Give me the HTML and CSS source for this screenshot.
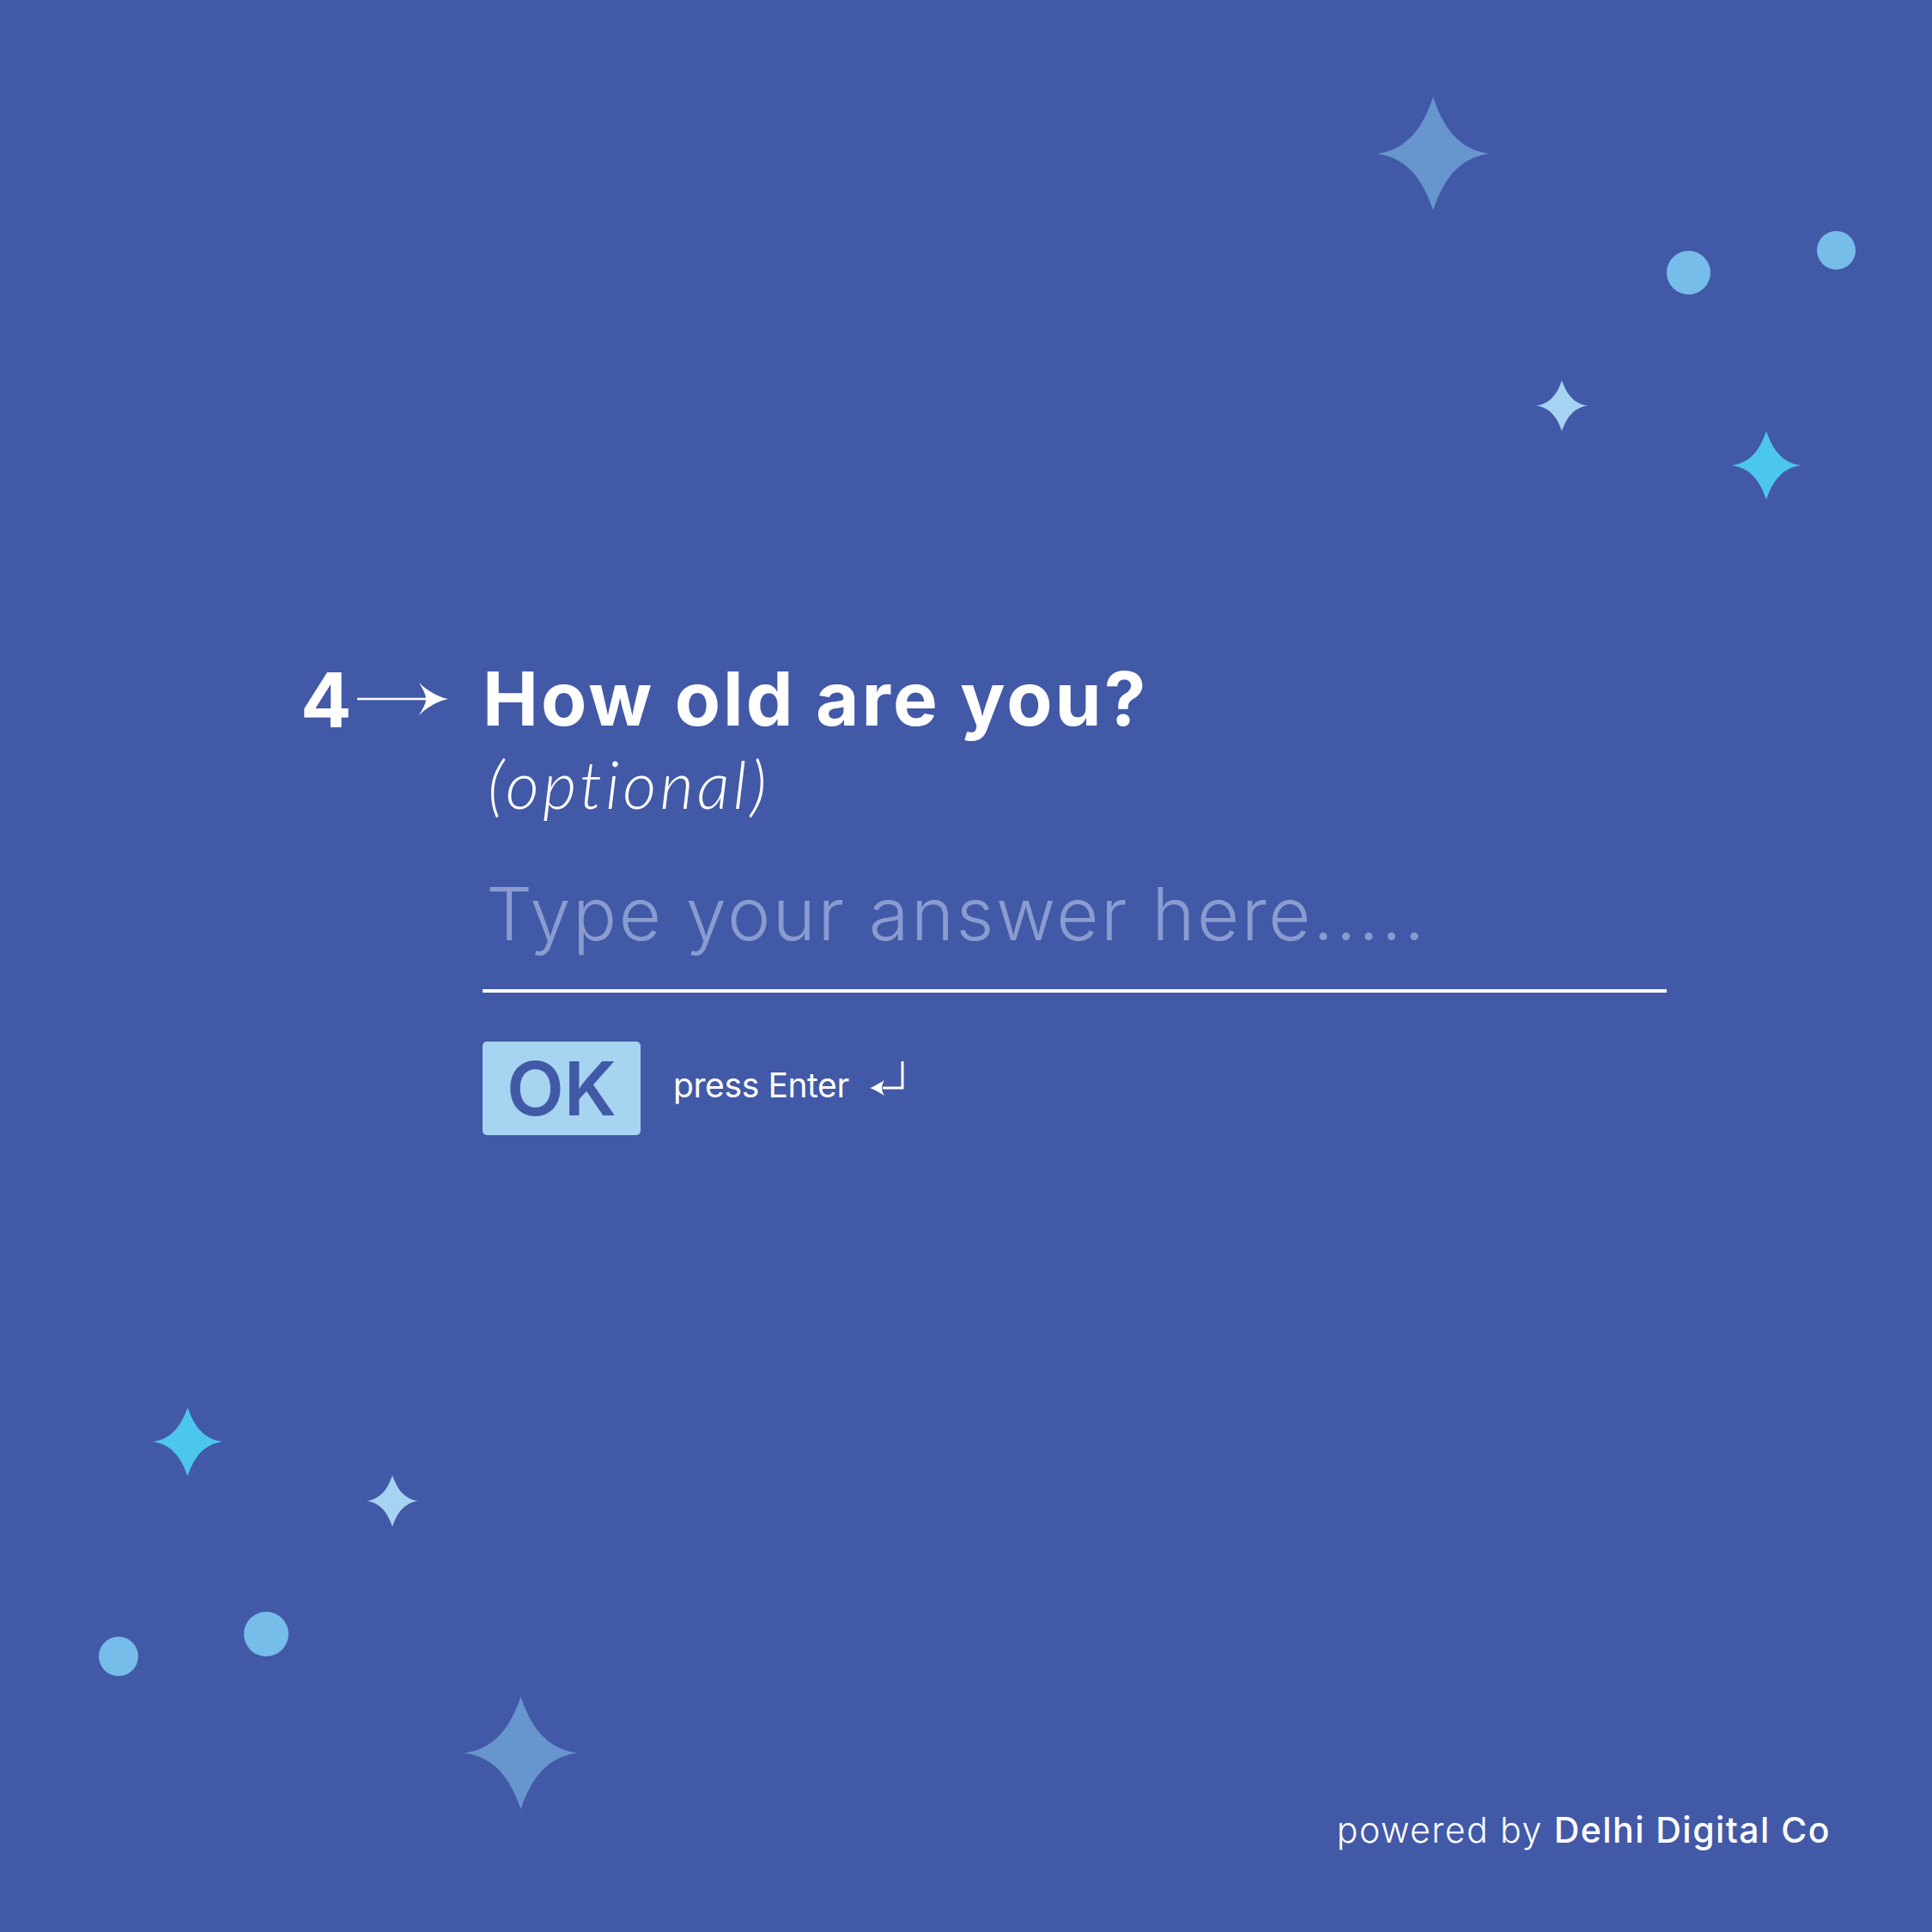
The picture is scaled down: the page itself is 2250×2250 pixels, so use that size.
FILE: index.html
```html
<!DOCTYPE html>
<html lang="en">
<head>
<meta charset="utf-8">
<title>How old are you?</title>
<link rel="stylesheet" href="styles.css">
</head>
<body>
<main class="canvas">
  <svg class="deco star-big deco-tr1" viewBox="0 0 100 100" preserveAspectRatio="none" aria-hidden="true"><path d="M50 0 C59 26 72 46 100 50 C72 54 59 74 50 100 C41 74 28 54 0 50 C28 46 41 26 50 0 Z"/></svg>
  <span class="deco dot dot-tr1"></span>
  <span class="deco dot dot-tr2"></span>
  <svg class="deco star-light deco-tr2" viewBox="0 0 100 100" preserveAspectRatio="none" aria-hidden="true"><path d="M50 0 C59 26 72 46 100 50 C72 54 59 74 50 100 C41 74 28 54 0 50 C28 46 41 26 50 0 Z"/></svg>
  <svg class="deco star-cyan deco-tr3" viewBox="0 0 100 100" preserveAspectRatio="none" aria-hidden="true"><path d="M50 0 C59 26 72 46 100 50 C72 54 59 74 50 100 C41 74 28 54 0 50 C28 46 41 26 50 0 Z"/></svg>

  <svg class="deco star-cyan deco-bl1" viewBox="0 0 100 100" preserveAspectRatio="none" aria-hidden="true"><path d="M50 0 C59 26 72 46 100 50 C72 54 59 74 50 100 C41 74 28 54 0 50 C28 46 41 26 50 0 Z"/></svg>
  <svg class="deco star-light deco-bl2" viewBox="0 0 100 100" preserveAspectRatio="none" aria-hidden="true"><path d="M50 0 C59 26 72 46 100 50 C72 54 59 74 50 100 C41 74 28 54 0 50 C28 46 41 26 50 0 Z"/></svg>
  <span class="deco dot dot-bl1"></span>
  <span class="deco dot dot-bl2"></span>
  <svg class="deco star-big deco-bl3" viewBox="0 0 100 100" preserveAspectRatio="none" aria-hidden="true"><path d="M50 0 C59 26 72 46 100 50 C72 54 59 74 50 100 C41 74 28 54 0 50 C28 46 41 26 50 0 Z"/></svg>

  <section class="question">
    <div class="q-index">
      <span class="q-num">4</span>
      <svg class="q-arrow" viewBox="0 0 106 40" aria-hidden="true">
        <line x1="0" y1="20" x2="82" y2="20" stroke="#fff" stroke-width="2.5"/>
        <path d="M106 20 C95 22 82 29 72 39 C76 32 80 26 80 20 C80 14 76 8 72 1 C82 11 95 18 106 20 Z" fill="#fff"/>
      </svg>
    </div>
    <div class="q-body">
      <h1 class="q-title">How old are you?</h1>
      <p class="q-hint">(optional)</p>
      <div class="q-answer">Type your answer here.....</div>
      <div class="q-actions">
        <button class="ok-btn" type="button">OK</button>
        <span class="press">press Enter</span>
        <svg class="enter-icon" viewBox="0 0 40 42" aria-hidden="true">
          <path d="M38 0 V31 H15" fill="none" stroke="#fff" stroke-width="3"/>
          <path d="M0 31 C6 29 12 25 17 22 C15 25 14 28 14 31 C14 34 15 37 17 40 C12 37 6 33 0 31 Z" fill="#fff"/>
        </svg>
      </div>
    </div>
  </section>

  <footer class="powered">powered by <strong>Delhi Digital Co</strong></footer>
</main>
</body>
</html>
```

FILE: styles.css
```css
html, body {
  margin: 0;
  padding: 0;
  background: #4259a7;
}

.canvas {
  position: relative;
  width: 2250px;
  height: 2250px;
  box-sizing: border-box;
  padding: 770px 118px 98px 350px;
  display: flex;
  flex-direction: column;
  background: #4259a7;
  color: #ffffff;
  font-family: "Inter", "Open Sans", sans-serif;
  overflow: hidden;
}

/* decorations */
.deco {
  position: absolute;
  display: block;
}
.star-big { fill: #6795cd; }
.star-light { fill: #a6d3f1; }
.star-cyan { fill: #4dc6ee; }
.dot {
  border-radius: 50%;
  background: #76bde9;
}

.deco-tr1 { left: 1604px; top: 113px; width: 130px; height: 132px; }
.dot-tr1 { left: 1941px; top: 292px; width: 51px; height: 51px; }
.dot-tr2 { left: 2116px; top: 269px; width: 45px; height: 45px; }
.deco-tr2 { left: 1789px; top: 443px; width: 60px; height: 59px; }
.deco-tr3 { left: 2017px; top: 502px; width: 80px; height: 80px; }

.deco-bl1 { left: 178px; top: 1639px; width: 81px; height: 80px; }
.deco-bl2 { left: 427px; top: 1718px; width: 60px; height: 60px; }
.dot-bl1 { left: 115px; top: 1906px; width: 46px; height: 46px; }
.dot-bl2 { left: 284px; top: 1877px; width: 52px; height: 52px; }
.deco-bl3 { left: 541px; top: 1976px; width: 131px; height: 131px; }

/* question */
.question {
  display: flex;
  align-items: flex-start;
}

.q-index {
  width: 212px;
  height: 87px;
  display: flex;
  align-items: center;
  flex-shrink: 0;
}

.q-num {
  font-size: 88px;
  line-height: 1;
  font-weight: 700;
  margin-top: 2px;
}

.q-arrow {
  width: 106px;
  height: 40px;
  margin-left: 6px;
}

.q-body {
  display: flex;
  flex-direction: column;
  align-items: flex-start;
}

.q-title {
  margin: 0;
  font-size: 87px;
  line-height: 1;
  font-weight: 700;
  letter-spacing: 3px;
}

.q-hint {
  margin: 18px 0 0 6px;
  font-family: "Lato", "Inter", sans-serif;
  font-style: italic;
  font-weight: 300;
  font-size: 76px;
  line-height: 1;
  letter-spacing: 4.1px;
  font-variant-ligatures: none;
}

.q-answer {
  margin-top: 71px;
  width: 1379px;
  padding: 0 0 45px 4px;
  box-sizing: border-box;
  border-bottom: 4px solid #ffffff;
  font-size: 85px;
  line-height: 1;
  font-weight: 300;
  letter-spacing: 2.5px;
  color: #8a9bd0;
}

.q-actions {
  margin-top: 57px;
  display: flex;
  align-items: center;
}

.ok-btn {
  width: 184px;
  height: 109px;
  border: 0;
  border-radius: 5px;
  background: #a6d4f1;
  color: #4259a7;
  font-family: "Inter", sans-serif;
  font-weight: 600;
  font-size: 87px;
  line-height: 1;
  padding: 0;
  display: flex;
  align-items: center;
  justify-content: center;
}

.press {
  margin-left: 38px;
  margin-bottom: 8px;
  font-size: 39px;
  line-height: 1;
  font-weight: 400;
  letter-spacing: -0.4px;
}

.enter-icon {
  width: 40px;
  height: 42px;
  margin-left: 24px;
  align-self: flex-start;
  margin-top: 23px;
}

.powered {
  margin-top: auto;
  align-self: flex-end;
  font-size: 41px;
  line-height: 1;
  font-weight: 300;
  letter-spacing: 1.45px;
}

.powered strong {
  font-weight: 500;
}
```
